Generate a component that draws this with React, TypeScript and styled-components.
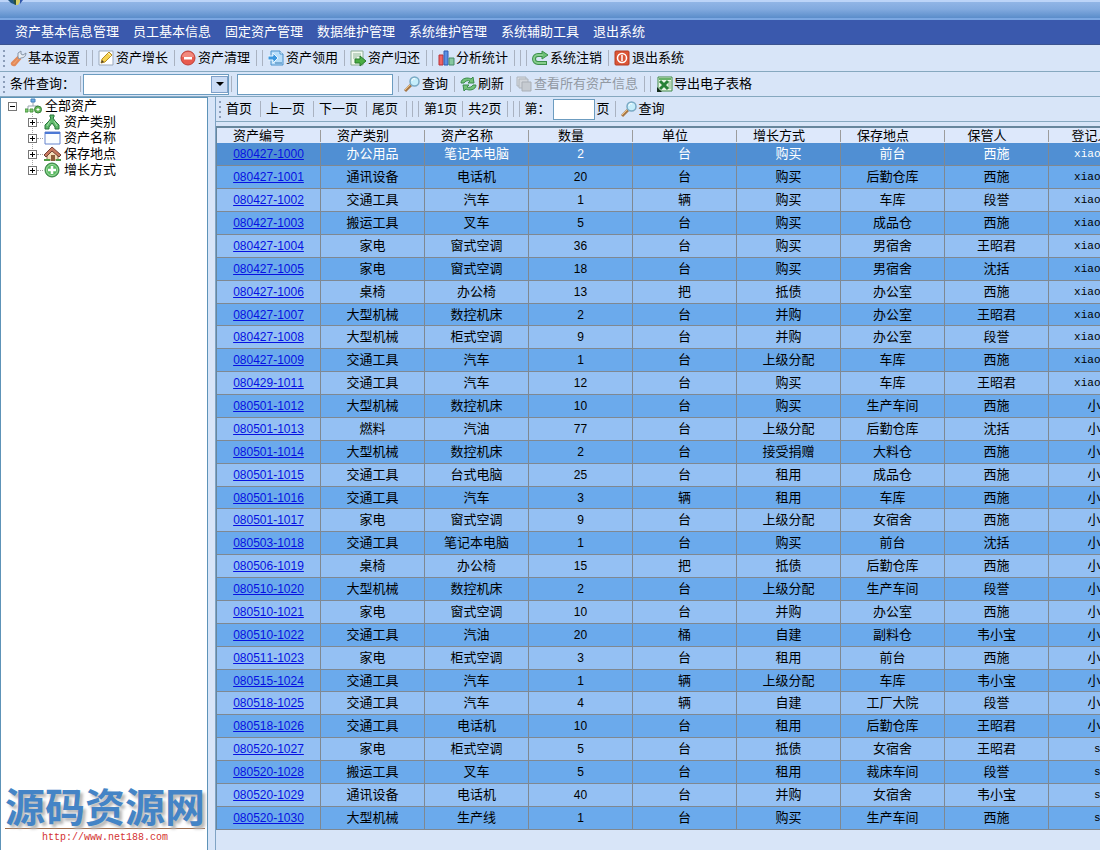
import React from "react";
import styled, { createGlobalStyle, css } from "styled-components";

const GlobalStyle = createGlobalStyle`
  * { box-sizing: border-box; }
  body {
    margin: 0;
    background: #d8e5f8;
    color: #000;
    font-family: "Liberation Sans", "Noto Sans CJK SC", sans-serif;
    font-size: 13px;
    line-height: 16px;
  }
  button, input, select { font: inherit; color: inherit; }
`;

const Page = styled.div`
  display: flex;
  flex-direction: column;
  min-height: 100vh;
  overflow: hidden;
`;

const TitleBar = styled.header`
  height: 20px;
  padding-left: 7px;
  border-top: 2px solid #bcd4f8;
  background: linear-gradient(#91b5e6, #82aadf 40%, #5b8dca 88%, #7ba7e2 90%);
  svg { display: block; margin-top: -2px; }
`;

const MenuBar = styled.nav`
  display: flex;
  align-items: center;
  gap: 14px;
  height: 25px;
  padding-left: 15px;
  background: #3a59ad;
  border-bottom: 1px solid #3c5490;
`;

const MenuButton = styled.button`
  padding: 0;
  border: 0;
  background: none;
  color: #fff;
  white-space: nowrap;
`;

const Toolbar = styled.div<{ $height: number }>`
  display: flex;
  align-items: center;
  gap: 5px;
  height: ${(p) => p.$height}px;
  padding-left: 3px;
  background: #d8e5f8;
  border-bottom: 1px solid #86a8bf;
  white-space: nowrap;
`;

const Grip = styled.span`
  width: 2px;
  height: 17px;
  background: repeating-linear-gradient(#8b9db8 0 2px, transparent 2px 5px);
`;

const Separator = styled.span`
  flex: none;
  width: 1px;
  height: 16px;
  background: #a9b2c1;
`;

const ToolButton = styled.button`
  display: flex;
  align-items: center;
  gap: 1px;
  padding: 0 1px 0 0;
  border: 0;
  background: none;
  &:disabled { color: #9299a3; }
  svg { flex: none; }
`;

const PageButton = styled(ToolButton)`
  padding: 0 3px 0 0;
`;

const Field = styled.input<{ $width: number }>`
  width: ${(p) => p.$width}px;
  height: 21px;
  padding: 0 4px;
  border: 1px solid #6c9cc0;
  border-radius: 0;
  background: #fff;
  outline: 0;
`;

const PageField = styled(Field)`
  margin: 0 -3px;
`;

const Combo = styled.div`
  position: relative;
  margin: 0 -3px;
`;

const ComboSelect = styled.select`
  display: block;
  width: 146px;
  height: 21px;
  padding: 0 20px 0 4px;
  border: 1px solid #6c9cc0;
  border-radius: 0;
  background: #fff;
  appearance: none;
`;

const ComboArrow = styled.span`
  position: absolute;
  top: 2px;
  right: 1px;
  display: flex;
  align-items: center;
  justify-content: center;
  width: 17px;
  height: 17px;
  border: 1px solid #7fa0c8;
  background: #cbdcf5;
  pointer-events: none;
  &::before {
    content: "";
    border: 4px solid transparent;
    border-top-color: #000;
    border-bottom: 0;
  }
`;

const Body = styled.div`
  display: flex;
  flex: 1;
`;

const Sidebar = styled.aside`
  display: flex;
  flex-direction: column;
  flex: none;
  width: 208px;
  border: 1px solid #5d93b8;
  border-bottom: 0;
  background: #fff;
`;

const TreeList = styled.ul`
  margin: 0;
  padding: 0;
  list-style: none;
`;

const TreeBranch = styled(TreeList)`
  margin-left: 31px;
  background: repeating-linear-gradient(#a5a5a5 0 1px, transparent 1px 2px) 0 0 / 1px 56px no-repeat;
`;

const TreeRow = styled.div<{ $level: number }>`
  display: flex;
  align-items: center;
  height: 16px;
  margin-left: ${(p) => (p.$level === 0 ? 7 : -4)}px;
`;

const Toggle = styled.button`
  display: flex;
  width: 9px;
  height: 9px;
  padding: 0;
  border: 1px solid #777;
  background: #fff;
`;

const Twig = styled.span`
  width: 6px;
  border-top: 1px dotted #a0a0a0;
`;

const TreeIcon = styled.span<{ $level: number }>`
  display: flex;
  margin: ${(p) => (p.$level === 0 ? "0 3px 0 8px" : "0 3px 0 1px")};
`;

const Watermark = styled.a`
  margin: auto 2px 4px 4px;
  color: #d3322f;
  text-align: center;
  text-decoration: none;
  font: 10px/16px "Liberation Mono", monospace;
`;

const WatermarkName = styled.strong`
  display: block;
  margin-bottom: 1px;
  border-bottom: 1px solid #9c6c4c;
  color: #4484c6;
  font: 700 40px/45px "Noto Sans CJK SC", sans-serif;
  text-shadow: 3px 3px 3px #b8b8b8;
  white-space: nowrap;
`;

const Content = styled.main`
  flex: 1;
  min-width: 0;
  margin-left: 7px;
  border-left: 1px solid #7fa3c4;
  overflow: hidden;
`;

const Grid = styled.table`
  width: 937px;
  margin-top: 4px;
  table-layout: fixed;
  border-collapse: separate;
  border-spacing: 0;
  border-top: 2px solid #67869c;
  border-left: 1px solid #67869c;
  text-align: center;
  white-space: nowrap;
  font-kerning: none;
`;

const HeadCell = styled.th`
  height: 15px;
  padding: 0 20px 0 0;
  background: linear-gradient(#9c9c9c, #9c9c9c) right center / 1px 12px no-repeat #dde8fb;
  font-weight: 400;
  line-height: 15px;
`;

const Row = styled.tr<{ $selected: boolean }>`
  height: 23px;
  background: #94c0f3;
  &:nth-child(even) { background: #6baaec; }
  &:nth-child(8n) { height: 22px; }
  ${(p) =>
    p.$selected &&
    css`
      background: #508fd3;
      color: #fff;
    `}
`;

type CellKind = "text" | "number" | "login";

const cellFonts = {
  text: css``,
  number: css`
    font-size: 12px;
  `,
  login: css`
    font-family: "Liberation Mono", monospace;
    font-size: 11px;
  `,
};

const Cell = styled.td<{ $kind: CellKind }>`
  padding: 0;
  border-right: 1px solid #7f8891;
  border-bottom: 1px solid #7f8891;
  line-height: 16px;
  ${(p) => cellFonts[p.$kind]}
`;

const AssetLink = styled.a`
  color: #0612e2;
`;

const icons = {
  wrench: (
    <>
      <path d="M2 13l6-6 2 2-5 6c-2 1-4-1-3-2z" fill="#f0a06c" stroke="#e28a5a" strokeWidth="2" />
      <path d="M8 7V3l3-2v3l2 1 3-2c0 3-2 5-5 5L9 9z" fill="#e8edf3" stroke="#8795a8" />
    </>
  ),
  edit: (
    <>
      <path d="M1 1h14v14H1z" fill="#fff" stroke="#9aa9bd" />
      <path d="M3 13l1-4 7-7 3 3-7 7z" fill="#f5d251" stroke="#b88e22" />
      <path d="M3 13l1-3 2 2z" fill="#4c4132" />
      <path d="M10 3l3 3" stroke="#fff4bd" />
    </>
  ),
  remove: (
    <>
      <circle cx="8" cy="8" r="7" fill="#e85b4f" stroke="#bd4038" />
      <path d="M2 7a6 5 0 0 1 12 0z" fill="#f18a7f" />
      <path d="M4 7h8v2.500H4z" fill="#fff" />
    </>
  ),
  take: (
    <>
      <path d="M3 1h9l3 3v11H3z" fill="#b8defa" stroke="#4a91cb" />
      <path d="M12 1v3h3" fill="#fff" stroke="#4a91cb" />
      <path d="M0 6h5V3l5 5-5 5v-3H0z" fill="#3c98df" stroke="#e8f6ff" />
      <path d="M7 13h7" stroke="#3479b0" />
    </>
  ),
  giveBack: (
    <>
      <path d="M1 1h12v14H1z" fill="#f3faf1" stroke="#8cab94" />
      <path d="M3 4h8M3 6h8M3 8h4" stroke="#8fb497" />
      <path d="M5 9h5V6l6 5-6 5v-3H5z" fill="#4aad43" stroke="#287a2d" />
    </>
  ),
  chart: (
    <>
      <path d="M1 5h4v10H1z" fill="#ee6565" stroke="#b93138" />
      <path d="M6 1h4v14H6z" fill="#5b8fe3" stroke="#2f5ab0" />
      <path d="M11 8h5v7h-5z" fill="#86c7a0" stroke="#478b68" />
    </>
  ),
  logout: (
    <>
      <path d="M10 5H6a4 4 0 0 0 0 8h9" fill="none" stroke="#3b8f4a" strokeWidth="4" />
      <path d="M10 1l6 4-6 4z" fill="#6cc077" stroke="#3b8f4a" />
      <path d="M11 5H6a4 4 0 0 0 0 8h8" fill="none" stroke="#86cd8c" strokeWidth="2" />
    </>
  ),
  power: (
    <>
      <rect x="1" y="1" width="14" height="14" rx="1" fill="#dc5637" stroke="#b33b23" />
      <circle cx="8" cy="8" r="4.500" fill="none" stroke="#fff" strokeWidth="1.500" />
      <path d="M8 5v6" stroke="#fff" strokeWidth="1.500" />
    </>
  ),
  search: (
    <>
      <path d="M1 15l6-6" stroke="#a77746" strokeWidth="3" />
      <path d="M1 14l6-6" stroke="#efc27e" />
      <circle cx="10.500" cy="5.500" r="4.500" fill="#c6eefb" stroke="#79a9c4" strokeWidth="1.500" />
      <path d="M8 5c0-2 1-3 3-2" fill="none" stroke="#fff" />
    </>
  ),
  refresh: (
    <>
      <path d="M1 7c0-5 7-6 10-4l2-2 1 6H8l2-2C8 4 5 5 4 7z" fill="#74c27a" stroke="#3a8a4b" />
      <path d="M16 9c0 5-7 6-10 4l-2 2-1-6h6l-2 2c2 1 5 0 6-2z" fill="#74c27a" stroke="#3a8a4b" />
    </>
  ),
  copies: (
    <>
      <path d="M1 1h9v9H1z" fill="#d9dde2" stroke="#afb5bc" />
      <path d="M3 3h9v9H3z" fill="#d2d6db" stroke="#afb5bc" />
      <path d="M6 6h9v9H6z" fill="#c6cbd1" stroke="#a9afb6" />
    </>
  ),
  excel: (
    <>
      <path d="M2 1h14v14H2z" fill="#eaf6e6" stroke="#3e8846" />
      <path d="M3 2h12v2H3z" fill="#68b36a" />
      <path d="M12 6h3M12 8h3M12 10h3M12 12h3" stroke="#7cb77e" />
      <path d="M4 5l8 8M12 5l-8 8" stroke="#298237" strokeWidth="3" />
      <path d="M1 16v-5l5 5z" fill="#142b19" />
    </>
  ),
  root: (
    <>
      <path d="M8 4v4M3 11V8h10v3" fill="none" stroke="#98a5af" />
      <path d="M6 1h4v3H6z" fill="#6caee8" stroke="#4580bb" />
      <path d="M0 11h3v3H0zM5 11h3v3H5z" fill="#7fcb6c" stroke="#4b9745" />
      <circle cx="13" cy="11.500" r="3.500" fill="#68b85b" stroke="#37833a" />
      <path d="M13 10v3M11.500 11.500h3" stroke="#fff" />
    </>
  ),
  category: (
    <>
      <path d="M6 1h4v2l-1 1 2 3 4 4v4h-4v-2L8 9l-3 4v2H1v-4l4-4 2-3-1-1z" fill="#5eb86b" stroke="#27753b" />
      <path d="M6 7l-3 5M10 7l3 5" stroke="#a8dfaa" />
    </>
  ),
  window: (
    <>
      <path d="M1 2h15v12H1z" fill="#fafdff" stroke="#6684cd" />
      <path d="M1 2h15v2H1z" fill="#4b78d5" />
    </>
  ),
  home: (
    <>
      <path d="M3 8v6h11V8L8 3z" fill="#f4ddba" stroke="#8c6e51" />
      <path d="M0 9l8-8 9 8-2 2-7-6-6 6z" fill="#c8795f" stroke="#723f35" />
      <path d="M7 9h4v6H7z" fill="#8d5c3b" />
      <path d="M0 14h6M12 14h5" stroke="#4e9c43" strokeWidth="2" />
    </>
  ),
  add: (
    <>
      <circle cx="8" cy="8" r="7" fill="#59b860" stroke="#337d40" />
      <circle cx="8" cy="8" r="5.500" fill="none" stroke="#a0dca0" />
      <path d="M8 4v8M4 8h8" stroke="#fff" strokeWidth="2.500" />
    </>
  ),
};

type IconName = keyof typeof icons;

const Icon = ({ name }: { name: IconName }) => (
  <svg width="17" height="17" viewBox="0 0 17 17" aria-hidden="true">
    {icons[name]}
  </svg>
);

const ToggleBox = ({ open, label }: { open: boolean; label: string }) => (
  <Toggle type="button" aria-label={label} aria-expanded={open}>
    <svg width="7" height="7" viewBox="0 0 7 7">
      <path d={open ? "M1 3h5v1H1z" : "M1 3h5v1H1zM3 1h1v5H3z"} fill="#000" />
    </svg>
  </Toggle>
);

const Separators = ({ count = 1 }: { count?: number }) => (
  <>
    {Array.from({ length: count }, (_, i) => (
      <Separator key={i} />
    ))}
  </>
);

const menus = ["资产基本信息管理", "员工基本信息", "固定资产管理", "数据维护管理", "系统维护管理", "系统辅助工具", "退出系统"];

const tools: [IconName, string, number][] = [
  ["wrench", "基本设置", 2],
  ["edit", "资产增长", 1],
  ["remove", "资产清理", 2],
  ["take", "资产领用", 1],
  ["giveBack", "资产归还", 2],
  ["chart", "分析统计", 3],
  ["logout", "系统注销", 1],
  ["power", "退出系统", 0],
];

const branches: [IconName, string][] = [
  ["category", "资产类别"],
  ["window", "资产名称"],
  ["home", "保存地点"],
  ["add", "增长方式"],
];

const columns = ["资产编号", "资产类别", "资产名称", "数量", "单位", "增长方式", "保存地点", "保管人", "登记人"];

const assets = `080427-1000 办公用品 笔记本电脑 2 台 购买 前台 西施 xiaoxiao
080427-1001 通讯设备 电话机 20 台 购买 后勤仓库 西施 xiaoxiao
080427-1002 交通工具 汽车 1 辆 购买 车库 段誉 xiaoxiao
080427-1003 搬运工具 叉车 5 台 购买 成品仓 西施 xiaoxiao
080427-1004 家电 窗式空调 36 台 购买 男宿舍 王昭君 xiaoxiao
080427-1005 家电 窗式空调 18 台 购买 男宿舍 沈括 xiaoxiao
080427-1006 桌椅 办公椅 13 把 抵债 办公室 西施 xiaoxiao
080427-1007 大型机械 数控机床 2 台 并购 办公室 王昭君 xiaoxiao
080427-1008 大型机械 柜式空调 9 台 并购 办公室 段誉 xiaoxiao
080427-1009 交通工具 汽车 1 台 上级分配 车库 西施 xiaoxiao
080429-1011 交通工具 汽车 12 台 购买 车库 王昭君 xiaoxiao
080501-1012 大型机械 数控机床 10 台 购买 生产车间 西施 小小
080501-1013 燃料 汽油 77 台 上级分配 后勤仓库 沈括 小小
080501-1014 大型机械 数控机床 2 台 接受捐赠 大料仓 西施 小小
080501-1015 交通工具 台式电脑 25 台 租用 成品仓 西施 小小
080501-1016 交通工具 汽车 3 辆 租用 车库 西施 小小
080501-1017 家电 窗式空调 9 台 上级分配 女宿舍 西施 小小
080503-1018 交通工具 笔记本电脑 1 台 购买 前台 沈括 小小
080506-1019 桌椅 办公椅 15 把 抵债 后勤仓库 西施 小小
080510-1020 大型机械 数控机床 2 台 上级分配 生产车间 段誉 小小
080510-1021 家电 窗式空调 10 台 并购 办公室 西施 小小
080510-1022 交通工具 汽油 20 桶 自建 副料仓 韦小宝 小小
080511-1023 家电 柜式空调 3 台 租用 前台 西施 小小
080515-1024 交通工具 汽车 1 辆 上级分配 车库 韦小宝 小小
080518-1025 交通工具 汽车 4 辆 自建 工厂大院 段誉 小小
080518-1026 交通工具 电话机 10 台 租用 后勤仓库 王昭君 小小
080520-1027 家电 柜式空调 5 台 抵债 女宿舍 王昭君 sa
080520-1028 搬运工具 叉车 5 台 租用 裁床车间 段誉 sa
080520-1029 通讯设备 电话机 40 台 并购 女宿舍 韦小宝 sa
080520-1030 大型机械 生产线 1 台 购买 生产车间 西施 sa`
  .split("\n")
  .map((line) => line.split(" "));

const kindOf = (value: string): CellKind =>
  /^\d+$/.test(value) ? "number" : /^[a-z]+$/.test(value) ? "login" : "text";

export default function App() {
  return (
    <Page>
      <GlobalStyle />
      <TitleBar>
        <svg width="18" height="6" viewBox="0 0 18 6" aria-hidden="true">
          <path d="M1 0h5l3 5-5-2z" fill="#1f5580" />
          <path d="M6 0h4v4L8 5z" fill="#274f3c" />
          <path d="M9 0h5l-3 5H9z" fill="#d5cf68" />
          <path d="M13 0h3l-3 4z" fill="#3156aa" />
        </svg>
      </TitleBar>
      <MenuBar>
        {menus.map((m) => (
          <MenuButton key={m} type="button">{m}</MenuButton>
        ))}
      </MenuBar>
      <Toolbar $height={27}>
        <Grip />
        {tools.map(([icon, text, after]) => (
          <React.Fragment key={text}>
            <ToolButton type="button">
              <Icon name={icon} />
              {text}
            </ToolButton>
            <Separators count={after} />
          </React.Fragment>
        ))}
      </Toolbar>
      <Toolbar $height={25}>
        <Grip />
        <label htmlFor="criterion">条件查询：</label>
        <Separators />
        <Combo>
          <ComboSelect id="criterion" />
          <ComboArrow />
        </Combo>
        <Separators />
        <Field $width={156} aria-label="查询内容" />
        <Separators />
        <ToolButton type="button"><Icon name="search" />查询</ToolButton>
        <Separators />
        <ToolButton type="button"><Icon name="refresh" />刷新</ToolButton>
        <Separators />
        <ToolButton type="button" disabled><Icon name="copies" />查看所有资产信息</ToolButton>
        <Separators count={2} />
        <ToolButton type="button"><Icon name="excel" />导出电子表格</ToolButton>
      </Toolbar>
      <Body>
        <Sidebar>
          <TreeList>
            <li>
              <TreeRow $level={0}>
                <ToggleBox open label="全部资产" />
                <TreeIcon $level={0}><Icon name="root" /></TreeIcon>
                全部资产
              </TreeRow>
              <TreeBranch>
                {branches.map(([icon, text]) => (
                  <li key={text}>
                    <TreeRow $level={1}>
                      <ToggleBox open={false} label={text} />
                      <Twig />
                      <TreeIcon $level={1}><Icon name={icon} /></TreeIcon>
                      {text}
                    </TreeRow>
                  </li>
                ))}
              </TreeBranch>
            </li>
          </TreeList>
          <Watermark href="#home">
            <WatermarkName>源码资源网</WatermarkName>
            http://www.net188.com
          </Watermark>
        </Sidebar>
        <Content>
          <Toolbar $height={25}>
            <Grip />
            <PageButton type="button">首页</PageButton>
            <Separators />
            <PageButton type="button">上一页</PageButton>
            <Separators />
            <PageButton type="button">下一页</PageButton>
            <Separators />
            <PageButton type="button">尾页</PageButton>
            <Separators count={3} />
            <span>第1页</span>
            <Separators />
            <span>共2页</span>
            <Separators count={3} />
            <label htmlFor="page-number">第：</label>
            <PageField id="page-number" $width={42} />
            <span>页</span>
            <Separators />
            <ToolButton type="button"><Icon name="search" />查询</ToolButton>
          </Toolbar>
          <Grid>
            <thead>
              <tr>
                {columns.map((c) => (
                  <HeadCell key={c} scope="col">{c}</HeadCell>
                ))}
              </tr>
            </thead>
            <tbody>
              {assets.map(([id, ...rest], i) => (
                <Row key={id} $selected={i === 0}>
                  <Cell $kind="number"><AssetLink href={`#${id}`}>{id}</AssetLink></Cell>
                  {rest.map((value, j) => (
                    <Cell key={j} $kind={kindOf(value)}>{value}</Cell>
                  ))}
                </Row>
              ))}
            </tbody>
          </Grid>
        </Content>
      </Body>
    </Page>
  );
}
